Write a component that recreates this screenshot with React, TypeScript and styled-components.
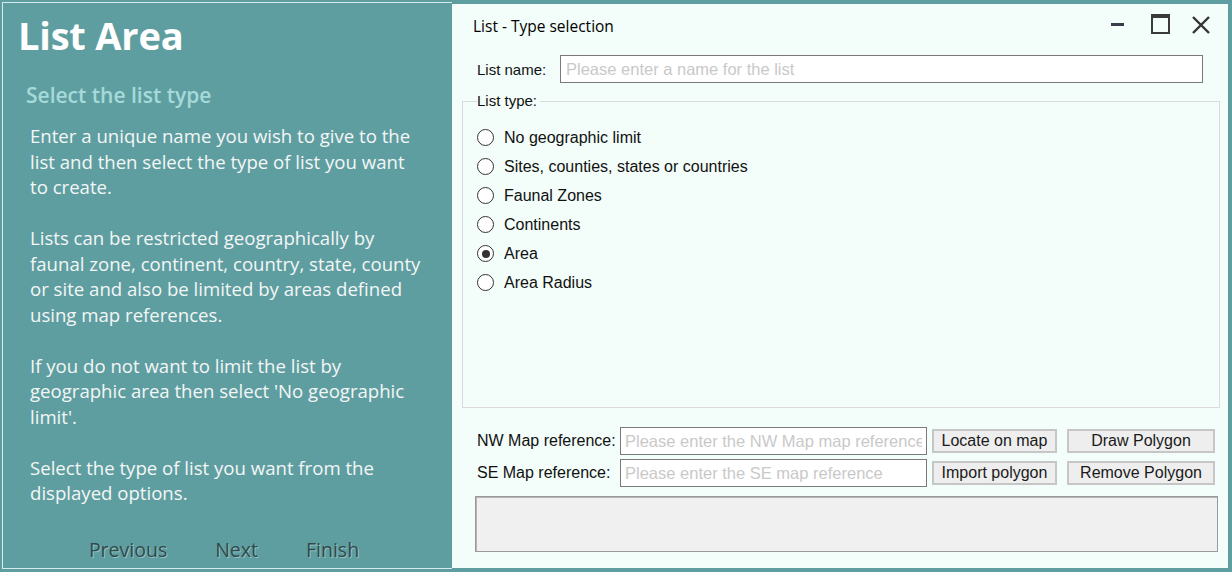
import React, { useState } from 'react';
import styled, { createGlobalStyle, css } from 'styled-components';

const GlobalStyle = createGlobalStyle`
  html, body {
    margin: 0;
    padding: 0;
    background: #5f9ea0;
  }
  * {
    box-sizing: border-box;
  }
`;

interface RadioProps {
  checked: boolean;
}

const listTypes = [
  'No geographic limit',
  'Sites, counties, states or countries',
  'Faunal Zones',
  'Continents',
  'Area',
  'Area Radius',
];

export default function App() {
  const [listType, setListType] = useState('Area');

  return (
    <Frame>
      <GlobalStyle />
      <SidePanel>
        <SideInner>
          <Title>List Area</Title>
          <SubTitle>Select the list type</SubTitle>
          <Help>
            <p>Enter a unique name you wish to give to the list and then select the type of list you want to create.</p>
            <p>
              Lists can be restricted geographically by faunal zone, continent, country, state, county or site and also be
              limited by areas defined using map references.
            </p>
            <p>If you do not want to limit the list by geographic area then select 'No geographic limit'.</p>
            <p>Select the type of list you want from the displayed options.</p>
          </Help>
          <Nav>
            <NavButton>Previous</NavButton>
            <NavButton>Next</NavButton>
            <NavButton>Finish</NavButton>
          </Nav>
        </SideInner>
      </SidePanel>

      <Dialog>
        <TitleBar>
          <DialogTitle>List - Type selection</DialogTitle>
          <WindowControls>
            <Minimize />
            <Maximize />
            <svg width="20" height="20" viewBox="0 0 20 20">
              <path d="M2 2 L18 18 M18 2 L2 18" stroke="#333" strokeWidth="2.4" />
            </svg>
          </WindowControls>
        </TitleBar>

        <NameRow>
          <Label>List name:</Label>
          <TextInput placeholder="Please enter a name for the list" />
        </NameRow>

        <GroupBox>
          <Legend>List type:</Legend>
          {listTypes.map((t) => (
            <RadioRow key={t} onClick={() => setListType(t)}>
              <RadioCircle checked={listType === t} />
              {t}
            </RadioRow>
          ))}
        </GroupBox>

        <MapRows>
          <MapRow>
            <MapLabel>NW Map reference:</MapLabel>
            <MapInput placeholder="Please enter the NW Map map reference" />
            <Button>Locate on map</Button>
            <WideButton>Draw Polygon</WideButton>
          </MapRow>
          <MapRow>
            <MapLabel>SE Map reference:</MapLabel>
            <MapInput placeholder="Please enter the SE map reference" />
            <Button>Import polygon</Button>
            <WideButton>Remove Polygon</WideButton>
          </MapRow>
        </MapRows>

        <StatusBox />
      </Dialog>
    </Frame>
  );
}

const Frame = styled.div`
  width: 1232px;
  height: 572px;
  display: flex;
  background: #5f9ea0;
`;

const SidePanel = styled.div`
  width: 452px;
  height: 572px;
  padding: 2px 0 3px 2px;
  display: flex;
`;

const SideInner = styled.div`
  flex: 1;
  display: flex;
  flex-direction: column;
  border: 1px solid #d6ebeb;
  border-right: none;
  padding: 0 0 0 15px;
  font-family: 'Open Sans', 'Noto Sans', sans-serif;
`;

const Title = styled.h1`
  margin: 6px 0 0;
  font-size: 38px;
  line-height: 52px;
  font-weight: 700;
  color: #ffffff;
  letter-spacing: -0.2px;
`;

const SubTitle = styled.h2`
  margin: 19px 0 0 8px;
  font-size: 21px;
  line-height: 30px;
  font-weight: 600;
  color: #a6dada;
`;

const Help = styled.div`
  margin: 13px 0 0 12px;
  width: 393px;
  color: #f3f6f6;
  font-size: 18.6px;
  line-height: 25.5px;

  p {
    margin: 0 0 25.5px;
  }
`;

const Nav = styled.div`
  margin-top: auto;
  margin-bottom: 4px;
  display: flex;
  justify-content: center;
  gap: 48px;
  padding-right: 22px;
`;

const NavButton = styled.span`
  font-size: 19.5px;
  line-height: 28px;
  color: #2f4a4b;
  text-shadow: 1px 1px 0 rgba(255, 255, 255, 0.35);
  cursor: pointer;
`;

const Dialog = styled.div`
  flex: 1;
  margin: 4px 4px 4px 0;
  background: #f3fdf9;
  display: flex;
  flex-direction: column;
  font-family: 'Liberation Sans', Arial, sans-serif;
  font-size: 16px;
  color: #111;
`;

const TitleBar = styled.div`
  height: 42px;
  display: flex;
  align-items: center;
  padding: 0 17px 0 21px;
`;

const DialogTitle = styled.span`
  font-family: 'Open Sans', 'Noto Sans', sans-serif;
  font-size: 15.5px;
  font-weight: 400;
  color: #000;
  margin-top: 1px;
`;

const WindowControls = styled.div`
  margin-left: auto;
  display: flex;
  align-items: center;

  svg {
    margin-left: 21px;
  }
`;

const Minimize = styled.div`
  width: 13px;
  height: 3px;
  background: #3a3a4a;
  margin-top: -2px;
`;

const Maximize = styled.div`
  width: 19px;
  height: 20px;
  margin-left: 27px;
  border: 2px solid #3a3a3a;
  border-top-width: 4px;
  margin-top: -2px;
`;

const NameRow = styled.div`
  display: flex;
  align-items: center;
  margin: 9px 25px 0 25px;
  height: 28px;
`;

const Label = styled.span`
  width: 83px;
  flex-shrink: 0;
  font-size: 15px;
`;

const inputStyle = css`
  height: 28px;
  border: 1px solid #7a7a7a;
  background: #ffffff;
  font-family: 'Liberation Sans', Arial, sans-serif;
  font-size: 16.5px;
  padding: 0 5px;
  color: #111;
  outline: none;

  &::placeholder {
    color: #c9c9c9;
  }
`;

const TextInput = styled.input`
  ${inputStyle}
  flex: 1;
`;

const GroupBox = styled.fieldset`
  flex: 1;
  margin: 9px 8px 0 10px;
  border: 1px solid #dadada;
  padding: 13px 0 0 14px;
  min-width: 0;
`;

const Legend = styled.legend`
  margin-left: 0;
  padding: 0 3px 0 0;
  line-height: 18px;
  font-size: 15px;
`;

const RadioRow = styled.div`
  display: flex;
  align-items: center;
  gap: 10px;
  height: 29px;
  cursor: pointer;
`;

const RadioCircle = styled.span<RadioProps>`
  width: 17px;
  height: 17px;
  border-radius: 50%;
  border: 1.5px solid #333;
  background: #fff;
  display: flex;
  align-items: center;
  justify-content: center;

  ${(props) =>
    props.checked &&
    css`
      &::after {
        content: '';
        width: 8px;
        height: 8px;
        border-radius: 50%;
        background: #333;
      }
    `}
`;

const MapRows = styled.div`
  display: flex;
  flex-direction: column;
  gap: 4px;
  margin: 19px 13px 0 25px;
`;

const MapRow = styled.div`
  display: flex;
  align-items: center;
  height: 28px;
`;

const MapLabel = styled.span`
  width: 143px;
  flex-shrink: 0;
  white-space: nowrap;
`;

const MapInput = styled.input`
  ${inputStyle}
  width: 307px;
  padding: 0 4px;
`;

const Button = styled.button`
  height: 24px;
  width: 125px;
  margin-left: 5px;
  background: #eeeeee;
  border: 2px solid #c6c6c6;
  font-family: 'Liberation Sans', Arial, sans-serif;
  font-size: 16px;
  color: #1a1a1a;
  padding: 0;
  cursor: pointer;
`;

const WideButton = styled(Button)`
  width: 148px;
  margin-left: 10px;
`;

const StatusBox = styled.div`
  height: 56px;
  margin: 9px 10px 16px 23px;
  background: #f0f0f0;
  border: 1px solid #9a9a9a;
  box-shadow: inset 1px 1px 0 #b4b4b4;
`;
